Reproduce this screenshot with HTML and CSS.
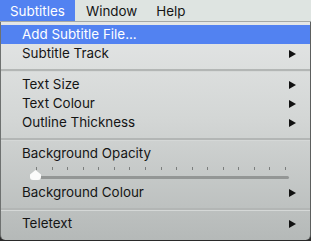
FILE: index.html
```
<!doctype html>
<html lang="en">
<head>
    <meta charset="UTF-8">
    <title>Subtitles menu</title>
    <link rel="stylesheet" href="styles.css">
</head>
<body>
    <div class="menubar">
        <div class="title active">Subtitles</div>
        <div class="title">Window</div>
        <div class="title">Help</div>
    </div>

    <div class="menu">
        <div class="item selected">Add Subtitle File...</div>
        <div class="item">Subtitle Track<span class="arrow"></span></div>
        <div class="sep"></div>
        <div class="item">Text Size<span class="arrow"></span></div>
        <div class="item">Text Colour<span class="arrow"></span></div>
        <div class="item">Outline Thickness<span class="arrow"></span></div>
        <div class="sep"></div>
        <div class="item">Background Opacity</div>
        <div class="slider">
            <div class="ticks">
                <i></i><i></i><i></i><i></i><i></i><i></i><i></i><i></i><i></i>
                <i></i><i></i><i></i><i></i><i></i><i></i><i></i><i></i>
            </div>
            <div class="track"></div>
            <div class="knob"></div>
        </div>
        <div class="item">Background Colour<span class="arrow"></span></div>
        <div class="sep"></div>
        <div class="item">Teletext<span class="arrow"></span></div>
    </div>
</body>
</html>
```

FILE: styles.css
```
*{
    box-sizing: border-box;
}

body{
    margin: 0;
    background-color: #2a2a2a;
    font-family: Inter, "Liberation Sans", sans-serif;
    font-size: 13.4px;
    color: #151515;
    height: 241px;
    overflow: hidden;
}

.menubar{
    height: 22px;
    background-color: #dee4e1;
    border-bottom: 1px solid #a4a8a7;
    display: flex;
}

.title{
    padding: 0 9px 0 10px;
    line-height: 22px;
}

.title.active{
    background-color: #5282f1;
    color: white;
    width: 75px;
    margin-right: 1px;
}

.menu{
    background: linear-gradient(#e4e6e6, #d3d6d5 45%, #b5b9b8);
    border-left: 1px solid #6e7170;
    border-right: 1px solid #5d605f;
    border-radius: 0 0 5px 5px;
    padding-top: 3px;
    height: 218px;
    overflow: hidden;
}

.item{
    height: 19px;
    line-height: 19px;
    padding-left: 21px;
    display: flex;
    align-items: center;
}

.item.selected{
    background-color: #5282f1;
    color: white;
}

.arrow{
    margin-left: auto;
    margin-right: 14px;
    width: 0;
    height: 0;
    border-top: 4.5px solid transparent;
    border-bottom: 4.5px solid transparent;
    border-left: 7px solid #111;
}

.sep{
    height: 12px;
    padding-top: 6px;
}

.sep::before{
    content: "";
    display: block;
    height: 2px;
    background-color: #b3b6b5;
    border-bottom: 1px solid #d5d8d7;
}

.slider{
    height: 20px;
    position: relative;
    padding: 4px 21px 0 32px;
}

.ticks{
    display: flex;
    justify-content: space-between;
    padding: 0 3px 0 3px;
    height: 4px;
}

.ticks i{
    width: 1px;
    height: 3px;
    background-color: #7b7e7d;
}

.track{
    margin-top: 5px;
    height: 3px;
    border-radius: 2px;
    background-color: #939695;
}

.knob{
    position: absolute;
    left: 29px;
    top: 7px;
    width: 11px;
    height: 10px;
    background-color: #fbfbfb;
    border-radius: 2px 2px 3px 3px;
    clip-path: polygon(50% 0, 100% 45%, 100% 100%, 0 100%, 0 45%);
}
```
